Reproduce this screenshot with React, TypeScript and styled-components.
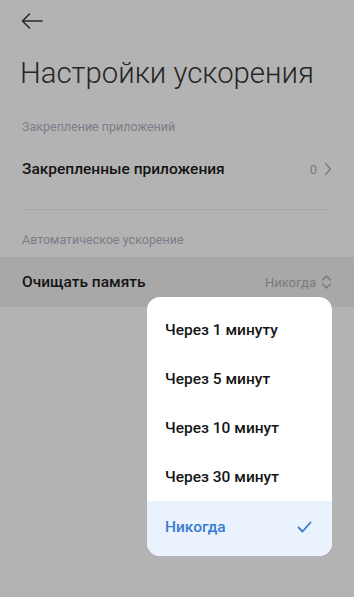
import React from "react";
import styled, { createGlobalStyle } from "styled-components";

const Global = createGlobalStyle`
  html, body { margin: 0; padding: 0; background: #b3b3b3; }
  body { font-family: Roboto, "Noto Sans", sans-serif; }
  #root { min-height: 597px; }
`;

const Screen = styled.div`
  position: relative;
  width: 354px;
  height: 597px;
  overflow: hidden;
  background: #b3b3b3;
`;

const Header = styled.div`
  height: 42px;
  display: flex;
  align-items: center;
  padding-left: 21px;
`;

const Title = styled.h1`
  margin: 14px 0 0 20px;
  font-family: Roboto, sans-serif;
  font-weight: 300;
  font-size: 29.3px;
  line-height: 34px;
  color: #262626;
  letter-spacing: 0;
`;

const SectionLabel = styled.div<{ $top: number }>`
  margin-top: ${(p) => p.$top}px;
  padding: 0 22px;
  height: 18px;
  line-height: 18px;
  font-size: 12.5px;
  color: #7d7c88;
`;

const Row = styled.div<{ $active?: boolean; $h: number; $top: number }>`
  display: flex;
  align-items: center;
  justify-content: space-between;
  margin-top: ${(p) => p.$top}px;
  height: ${(p) => p.$h}px;
  padding: 0 22px;
  background: ${(p) => (p.$active ? "#a8a8a8" : "transparent")};
`;

const RowTitle = styled.span`
  font-size: 15.5px;
  font-weight: 500;
  color: #141414;
`;

const RowValue = styled.span<{ $gap: number }>`
  display: flex;
  align-items: center;
  gap: ${(p) => p.$gap}px;
  font-size: 13px;
  color: #7a7a7a;
`;

const Divider = styled.div<{ $top: number }>`
  height: 1px;
  margin: ${(p) => p.$top}px 22px 0;
  background: #a9a9a9;
`;

const Popup = styled.div`
  position: absolute;
  left: 147px;
  top: 297px;
  width: 185px;
  height: 259px;
  box-sizing: border-box;
  padding-top: 8px;
  background: #ffffff;
  border-radius: 13px;
  overflow: hidden;
  display: flex;
  flex-direction: column;
`;

const Option = styled.div<{ $selected?: boolean }>`
  display: flex;
  align-items: center;
  justify-content: space-between;
  height: 49px;
  flex: ${(p) => (p.$selected ? "1" : "none")};
  padding: ${(p) => (p.$selected ? "0 20px 3px 18px" : "0 20px 0 18px")};
  font-size: 15.5px;
  font-weight: 500;
  color: ${(p) => (p.$selected ? "#3a7cd0" : "#151515")};
  background: ${(p) => (p.$selected ? "#e9f2fd" : "transparent")};
`;

const BackArrow = () => (
  <svg width="22" height="16" viewBox="0 0 22 16" fill="none">
    <path d="M1.5 8H21M8.5 1L1.5 8L8.5 15" stroke="#2a2a2a" strokeWidth="1.6" strokeLinecap="round" strokeLinejoin="round" />
  </svg>
);

const Chevron = () => (
  <svg width="8" height="14" viewBox="0 0 8 14" fill="none">
    <path d="M1.5 1.5L6.5 7L1.5 12.5" stroke="#7a7a7a" strokeWidth="1.3" strokeLinecap="round" strokeLinejoin="round" />
  </svg>
);

const UpDown = () => (
  <svg width="11" height="16" viewBox="0 0 11 16" fill="none">
    <path d="M1.5 6L5.5 2L9.5 6M1.5 10L5.5 14L9.5 10" stroke="#7a7a7a" strokeWidth="1.4" strokeLinecap="round" strokeLinejoin="round" />
  </svg>
);

const Check = () => (
  <svg width="15" height="12" viewBox="0 0 15 12" fill="none">
    <path d="M1.5 6.5L5.5 10.5L13.5 1.5" stroke="#3a7cd0" strokeWidth="1.8" strokeLinecap="round" strokeLinejoin="round" />
  </svg>
);

const options = ["Через 1 минуту", "Через 5 минут", "Через 10 минут", "Через 30 минут"];

export default function App() {
  return (
    <Screen>
      <Global />
      <Header>
        <BackArrow />
      </Header>
      <Title>Настройки ускорения</Title>
      <SectionLabel $top={28}>Закрепление приложений</SectionLabel>
      <Row $h={56} $top={5}>
        <RowTitle>Закрепленные приложения</RowTitle>
        <RowValue $gap={7}>
          0 <Chevron />
        </RowValue>
      </Row>
      <Divider $top={12} />
      <SectionLabel $top={21}>Автоматическое ускорение</SectionLabel>
      <Row $active $h={50} $top={8}>
        <RowTitle>Очищать память</RowTitle>
        <RowValue $gap={5}>
          Никогда <UpDown />
        </RowValue>
      </Row>
      <Popup>
        {options.map((o) => (
          <Option key={o}>{o}</Option>
        ))}
        <Option $selected>
          Никогда <Check />
        </Option>
      </Popup>
    </Screen>
  );
}
